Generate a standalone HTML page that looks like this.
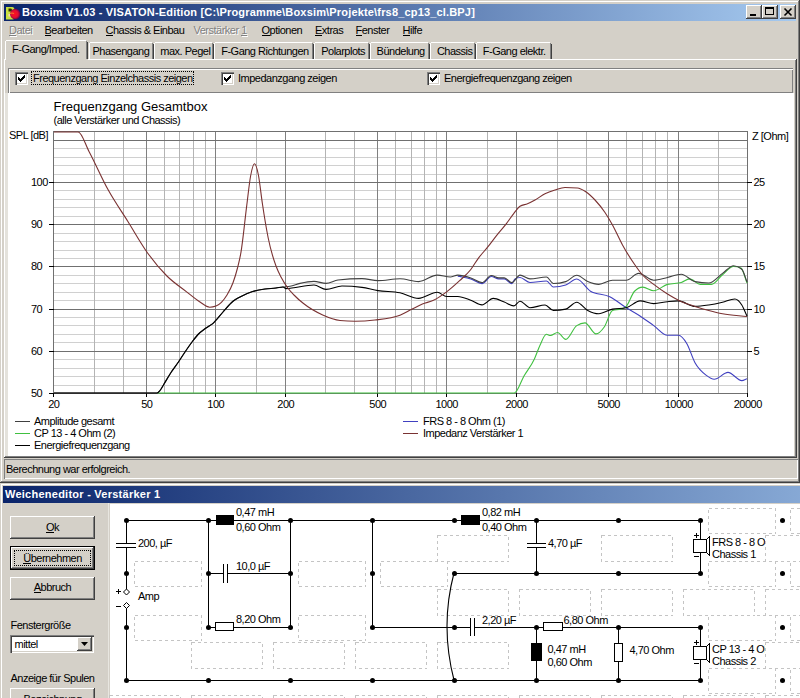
<!DOCTYPE html><html><head><meta charset="utf-8"><style>
html,body{margin:0;padding:0;}
body{width:800px;height:698px;overflow:hidden;position:relative;background:#D4D0C8;font-family:"Liberation Sans",sans-serif;}
.t{position:absolute;white-space:pre;line-height:13px;color:#000;}
u{text-decoration:none;border-bottom:1px solid currentColor;line-height:10px;display:inline-block}
</style></head><body>
<div style="position:absolute;left:0px;top:0px;width:800px;height:483px;background:#D4D0C8"></div>
<div style="position:absolute;left:1px;top:1px;width:797px;height:1px;background:#FFFFFF"></div>
<div style="position:absolute;left:1px;top:1px;width:1px;height:481px;background:#FFFFFF"></div>
<div style="position:absolute;left:798px;top:1px;width:1px;height:481px;background:#808080"></div>
<div style="position:absolute;left:799px;top:0px;width:1px;height:483px;background:#404040"></div>
<div style="position:absolute;left:1px;top:481px;width:798px;height:1px;background:#808080"></div>
<div style="position:absolute;left:0px;top:482px;width:800px;height:1px;background:#404040"></div>
<div style="position:absolute;left:4px;top:4px;width:792px;height:17px;background:linear-gradient(to right,#0A246A,#A6CAF0)"></div>
<svg style="position:absolute;left:4px;top:4px" width="18" height="17" viewBox="0 0 18 17">
<defs><radialGradient id="rg" cx=".45" cy=".5" r=".55"><stop offset="0" stop-color="#FF1020"/><stop offset=".6" stop-color="#E01030"/><stop offset="1" stop-color="#600050"/></radialGradient></defs>
<path d="M2 3 h6.5 q2 0 2 2.5 v1 q0 1.5 -1 2 q1.5 .5 1.5 2.5 v1.5 q0 3 -2.5 3 h-6.5 z" fill="#C8E040"/>
<path d="M4.5 4.5 h2.5 q1 0 1 1.5 q0 1.5 -1 1.5 h-2.5 z" fill="#303000"/>
<path d="M4.5 10 h3 v2.5 h-3 z" fill="#F0D0C0"/>
<circle cx="11.2" cy="10" r="5.2" fill="url(#rg)"/>
<path d="M6 9.5 q2 -1 4 0" stroke="#F08030" stroke-width="1.2" fill="none"/>
</svg>
<div class="t" style="left:22px;top:6.19px;font-size:11px;letter-spacing:0.17px;color:#fff;font-weight:bold;">Boxsim V1.03 - VISATON-Edition [C:\Programme\Boxsim\Projekte\frs8_cp13_cl.BPJ]</div>
<div style="position:absolute;left:746px;top:5px;width:16px;height:14px;background:#D4D0C8;box-shadow: inset -1px -1px 0 #404040, inset 1px 1px 0 #FFFFFF, inset -2px -2px 0 #808080;"></div>
<div style="position:absolute;left:762px;top:5px;width:16px;height:14px;background:#D4D0C8;box-shadow: inset -1px -1px 0 #404040, inset 1px 1px 0 #FFFFFF, inset -2px -2px 0 #808080;"></div>
<div style="position:absolute;left:780px;top:5px;width:16px;height:14px;background:#D4D0C8;box-shadow: inset -1px -1px 0 #404040, inset 1px 1px 0 #FFFFFF, inset -2px -2px 0 #808080;"></div>
<div style="position:absolute;left:750px;top:14px;width:6px;height:2px;background:#000"></div>
<div style="position:absolute;left:765px;top:7px;width:9px;height:8px;border:1px solid #000;border-top-width:2px;box-sizing:border-box"></div>
<svg style="position:absolute;left:780px;top:5px" width="16" height="14"><path d="M4.5 3.5 L11.5 10.5 M11.5 3.5 L4.5 10.5" stroke="#000" stroke-width="1.6"/></svg>
<div class="t" style="left:10px;top:25.09px;font-size:11px;letter-spacing:-0.5px;color:#fff;"><u>D</u>atei</div>
<div class="t" style="left:9px;top:24.09px;font-size:11px;letter-spacing:-0.5px;color:#808080;"><u>D</u>atei</div>
<div class="t" style="left:44.5px;top:24.09px;font-size:11px;letter-spacing:-0.5px;"><u>B</u>earbeiten</div>
<div class="t" style="left:105.5px;top:24.09px;font-size:11px;letter-spacing:-0.5px;"><u>C</u>hassis &amp; Einbau</div>
<div class="t" style="left:194.5px;top:25.09px;font-size:11px;letter-spacing:-0.5px;color:#fff;">Verstärker <u>1</u></div>
<div class="t" style="left:193.5px;top:24.09px;font-size:11px;letter-spacing:-0.5px;color:#808080;">Verstärker <u>1</u></div>
<div class="t" style="left:261.5px;top:24.09px;font-size:11px;letter-spacing:-0.5px;"><u>O</u>ptionen</div>
<div class="t" style="left:315px;top:24.09px;font-size:11px;letter-spacing:-0.5px;"><u>E</u>xtras</div>
<div class="t" style="left:355.5px;top:24.09px;font-size:11px;letter-spacing:-0.5px;"><u>F</u>enster</div>
<div class="t" style="left:402.5px;top:24.09px;font-size:11px;letter-spacing:-0.5px;"><u>H</u>ilfe</div>
<div style="position:absolute;left:4px;top:59px;width:794px;height:400px;background:#D4D0C8"></div>
<div style="position:absolute;left:4px;top:59px;width:792px;height:1px;background:#FFFFFF"></div>
<div style="position:absolute;left:4px;top:59px;width:1px;height:399px;background:#FFFFFF"></div>
<div style="position:absolute;left:795px;top:60px;width:1px;height:397px;background:#808080"></div>
<div style="position:absolute;left:796px;top:59px;width:1px;height:399px;background:#404040"></div>
<div style="position:absolute;left:5px;top:456px;width:791px;height:1px;background:#808080"></div>
<div style="position:absolute;left:4px;top:457px;width:793px;height:1px;background:#404040"></div>
<div style="position:absolute;left:89px;top:42px;width:65px;height:17px;background:#D4D0C8"></div>
<div style="position:absolute;left:89px;top:43px;width:1px;height:16px;background:#FFFFFF"></div>
<div style="position:absolute;left:90px;top:42px;width:62px;height:1px;background:#FFFFFF"></div>
<div style="position:absolute;left:152px;top:43px;width:1px;height:16px;background:#808080"></div>
<div style="position:absolute;left:153px;top:44px;width:1px;height:15px;background:#404040"></div>
<div class="t" style="left:92.5px;top:44.89px;font-size:11px;letter-spacing:-0.5px;">Phasengang</div>
<div style="position:absolute;left:154px;top:42px;width:60px;height:17px;background:#D4D0C8"></div>
<div style="position:absolute;left:154px;top:43px;width:1px;height:16px;background:#FFFFFF"></div>
<div style="position:absolute;left:155px;top:42px;width:57px;height:1px;background:#FFFFFF"></div>
<div style="position:absolute;left:212px;top:43px;width:1px;height:16px;background:#808080"></div>
<div style="position:absolute;left:213px;top:44px;width:1px;height:15px;background:#404040"></div>
<div class="t" style="left:160.3px;top:44.89px;font-size:11px;letter-spacing:-0.5px;">max. Pegel</div>
<div style="position:absolute;left:214px;top:42px;width:100px;height:17px;background:#D4D0C8"></div>
<div style="position:absolute;left:214px;top:43px;width:1px;height:16px;background:#FFFFFF"></div>
<div style="position:absolute;left:215px;top:42px;width:97px;height:1px;background:#FFFFFF"></div>
<div style="position:absolute;left:312px;top:43px;width:1px;height:16px;background:#808080"></div>
<div style="position:absolute;left:313px;top:44px;width:1px;height:15px;background:#404040"></div>
<div class="t" style="left:221.2px;top:44.89px;font-size:11px;letter-spacing:-0.5px;">F-Gang Richtungen</div>
<div style="position:absolute;left:314px;top:42px;width:56px;height:17px;background:#D4D0C8"></div>
<div style="position:absolute;left:314px;top:43px;width:1px;height:16px;background:#FFFFFF"></div>
<div style="position:absolute;left:315px;top:42px;width:53px;height:1px;background:#FFFFFF"></div>
<div style="position:absolute;left:368px;top:43px;width:1px;height:16px;background:#808080"></div>
<div style="position:absolute;left:369px;top:44px;width:1px;height:15px;background:#404040"></div>
<div class="t" style="left:321.2px;top:44.89px;font-size:11px;letter-spacing:-0.5px;">Polarplots</div>
<div style="position:absolute;left:370px;top:42px;width:60px;height:17px;background:#D4D0C8"></div>
<div style="position:absolute;left:370px;top:43px;width:1px;height:16px;background:#FFFFFF"></div>
<div style="position:absolute;left:371px;top:42px;width:57px;height:1px;background:#FFFFFF"></div>
<div style="position:absolute;left:428px;top:43px;width:1px;height:16px;background:#808080"></div>
<div style="position:absolute;left:429px;top:44px;width:1px;height:15px;background:#404040"></div>
<div class="t" style="left:376.6px;top:44.89px;font-size:11px;letter-spacing:-0.5px;">Bündelung</div>
<div style="position:absolute;left:430px;top:42px;width:46px;height:17px;background:#D4D0C8"></div>
<div style="position:absolute;left:430px;top:43px;width:1px;height:16px;background:#FFFFFF"></div>
<div style="position:absolute;left:431px;top:42px;width:43px;height:1px;background:#FFFFFF"></div>
<div style="position:absolute;left:474px;top:43px;width:1px;height:16px;background:#808080"></div>
<div style="position:absolute;left:475px;top:44px;width:1px;height:15px;background:#404040"></div>
<div class="t" style="left:436.9px;top:44.89px;font-size:11px;letter-spacing:-0.5px;">Chassis</div>
<div style="position:absolute;left:476px;top:42px;width:76px;height:17px;background:#D4D0C8"></div>
<div style="position:absolute;left:476px;top:43px;width:1px;height:16px;background:#FFFFFF"></div>
<div style="position:absolute;left:477px;top:42px;width:73px;height:1px;background:#FFFFFF"></div>
<div style="position:absolute;left:550px;top:43px;width:1px;height:16px;background:#808080"></div>
<div style="position:absolute;left:551px;top:44px;width:1px;height:15px;background:#404040"></div>
<div class="t" style="left:482.8px;top:44.89px;font-size:11px;letter-spacing:-0.5px;">F-Gang elektr.</div>
<div style="position:absolute;left:5px;top:40px;width:83px;height:20px;background:#D4D0C8"></div>
<div style="position:absolute;left:5px;top:41px;width:1px;height:19px;background:#FFFFFF"></div>
<div style="position:absolute;left:6px;top:40px;width:80px;height:1px;background:#FFFFFF"></div>
<div style="position:absolute;left:86px;top:41px;width:1px;height:18px;background:#808080"></div>
<div style="position:absolute;left:87px;top:42px;width:1px;height:17px;background:#404040"></div>
<div class="t" style="left:12px;top:43.39px;font-size:11px;letter-spacing:-0.5px;">F-Gang/Imped.</div>
<div style="position:absolute;left:8px;top:68px;width:785px;height:25px;background:#D4D0C8;box-shadow: inset 1px 1px 0 #808080, inset 2px 2px 0 #FFFFFF, inset -1px -1px 0 #808080;"></div>
<div style="position:absolute;left:15px;top:72px;width:13px;height:13px;background:#fff;box-shadow: inset 1px 1px 0 #808080, inset 2px 2px 0 #404040, inset -1px -1px 0 #FFFFFF, inset -2px -2px 0 #D4D0C8;"></div>
<svg style="position:absolute;left:15px;top:72px" width="13" height="13"><path d="M3 5 L5 7 L10 2 L10 5 L5 10 L3 8 Z" fill="#000" shape-rendering="crispEdges"/></svg>
<div class="t" style="left:33px;top:71.69px;font-size:11px;letter-spacing:-0.5px;">Frequenzgang Einzelchassis zeigen</div>
<div style="position:absolute;left:31px;top:71px;width:163px;height:14px;border:1px dotted #000;box-sizing:border-box"></div>
<div style="position:absolute;left:221px;top:72px;width:13px;height:13px;background:#fff;box-shadow: inset 1px 1px 0 #808080, inset 2px 2px 0 #404040, inset -1px -1px 0 #FFFFFF, inset -2px -2px 0 #D4D0C8;"></div>
<svg style="position:absolute;left:221px;top:72px" width="13" height="13"><path d="M3 5 L5 7 L10 2 L10 5 L5 10 L3 8 Z" fill="#000" shape-rendering="crispEdges"/></svg>
<div class="t" style="left:238px;top:71.69px;font-size:11px;letter-spacing:-0.5px;">Impedanzgang zeigen</div>
<div style="position:absolute;left:427px;top:72px;width:13px;height:13px;background:#fff;box-shadow: inset 1px 1px 0 #808080, inset 2px 2px 0 #404040, inset -1px -1px 0 #FFFFFF, inset -2px -2px 0 #D4D0C8;"></div>
<svg style="position:absolute;left:427px;top:72px" width="13" height="13"><path d="M3 5 L5 7 L10 2 L10 5 L5 10 L3 8 Z" fill="#000" shape-rendering="crispEdges"/></svg>
<div class="t" style="left:444px;top:71.69px;font-size:11px;letter-spacing:-0.5px;">Energiefrequenzgang zeigen</div>
<div style="position:absolute;left:8px;top:93px;width:786px;height:363px;background:#fff"></div>
<div style="position:absolute;left:5px;top:93px;width:3px;height:363px;background:#E4E2DC"></div>
<div style="position:absolute;left:4px;top:459px;width:794px;height:20px;background:#D4D0C8;box-shadow: inset 1px 1px 0 #808080, inset -1px -1px 0 #FFFFFF;"></div>
<div class="t" style="left:6px;top:462.69px;font-size:11px;letter-spacing:-0.5px;">Berechnung war erfolgreich.</div>
<div style="position:absolute;left:0px;top:483px;width:800px;height:215px;background:#D4D0C8"></div>
<div style="position:absolute;left:1px;top:484px;width:799px;height:1px;background:#FFFFFF"></div>
<div style="position:absolute;left:1px;top:484px;width:1px;height:214px;background:#FFFFFF"></div>
<div style="position:absolute;left:3px;top:486px;width:797px;height:17px;background:linear-gradient(to right,#0A246A 0px,#A6CAF0 1000px)"></div>
<div class="t" style="left:5px;top:488.19px;font-size:11px;letter-spacing:0.25px;color:#fff;font-weight:bold;">Weicheneditor - Verstärker 1</div>
<div style="position:absolute;left:110px;top:504px;width:690px;height:194px;background:#fff"></div>
<div style="position:absolute;left:108px;top:503px;width:1px;height:195px;background:#E8E6E0"></div>
<div style="position:absolute;left:10px;top:516px;width:85px;height:23px;background:#D4D0C8;box-shadow: inset -1px -1px 0 #404040, inset 1px 1px 0 #FFFFFF, inset -2px -2px 0 #808080;"></div>
<div class="t" style="left:-47.5px;width:200px;text-align:center;top:521.19px;font-size:11px;letter-spacing:-0.5px;"><u>O</u>k</div>
<div style="position:absolute;left:10px;top:546px;width:85px;height:24px;background:#000"></div>
<div style="position:absolute;left:11px;top:547px;width:83px;height:22px;background:#D4D0C8;box-shadow: inset -1px -1px 0 #404040, inset 1px 1px 0 #FFFFFF, inset -2px -2px 0 #808080;"></div>
<div style="position:absolute;left:14px;top:550px;width:77px;height:16px;border:1px dotted #000;box-sizing:border-box"></div>
<div class="t" style="left:-47.5px;width:200px;text-align:center;top:551.69px;font-size:11px;letter-spacing:-0.5px;"><u>Ü</u>bernehmen</div>
<div style="position:absolute;left:10px;top:577px;width:85px;height:23px;background:#D4D0C8;box-shadow: inset -1px -1px 0 #404040, inset 1px 1px 0 #FFFFFF, inset -2px -2px 0 #808080;"></div>
<div class="t" style="left:-47.5px;width:200px;text-align:center;top:581.39px;font-size:11px;letter-spacing:-0.5px;"><u>A</u>bbruch</div>
<div class="t" style="left:10.5px;top:619.19px;font-size:11px;letter-spacing:-0.5px;">Fenstergröße</div>
<div style="position:absolute;left:10px;top:635px;width:84px;height:18px;background:#fff;box-shadow: inset 1px 1px 0 #808080, inset 2px 2px 0 #404040, inset -1px -1px 0 #FFFFFF, inset -2px -2px 0 #D4D0C8;"></div>
<div style="position:absolute;left:77px;top:637px;width:15px;height:14px;background:#D4D0C8;box-shadow: inset -1px -1px 0 #404040, inset 1px 1px 0 #FFFFFF, inset -2px -2px 0 #808080;"></div>
<svg style="position:absolute;left:77px;top:637px" width="15" height="14"><path d="M4 5 h7 l-3.5 4 z" fill="#000"/></svg>
<div class="t" style="left:14.5px;top:638.39px;font-size:11px;letter-spacing:-0.5px;">mittel</div>
<div class="t" style="left:10.5px;top:672.39px;font-size:11px;letter-spacing:-0.5px;">Anzeige für Spulen</div>
<div style="position:absolute;left:10px;top:688px;width:85px;height:24px;background:#D4D0C8;box-shadow: inset -1px -1px 0 #404040, inset 1px 1px 0 #FFFFFF, inset -2px -2px 0 #808080;"></div>
<div class="t" style="left:-47.5px;width:200px;text-align:center;top:692.69px;font-size:11px;letter-spacing:-0.5px;">Bezeichnung</div>
<svg style="position:absolute;left:0;top:0" width="800" height="698"><g shape-rendering="crispEdges" stroke-width="1" fill="none"><line x1="54" x2="747" y1="385.5" y2="385.5" stroke="#D0D0D0"/><line x1="54" x2="747" y1="376.5" y2="376.5" stroke="#D0D0D0"/><line x1="54" x2="747" y1="368.5" y2="368.5" stroke="#D0D0D0"/><line x1="54" x2="747" y1="359.5" y2="359.5" stroke="#D0D0D0"/><line x1="54" x2="747" y1="342.5" y2="342.5" stroke="#D0D0D0"/><line x1="54" x2="747" y1="334.5" y2="334.5" stroke="#D0D0D0"/><line x1="54" x2="747" y1="325.5" y2="325.5" stroke="#D0D0D0"/><line x1="54" x2="747" y1="317.5" y2="317.5" stroke="#D0D0D0"/><line x1="54" x2="747" y1="300.5" y2="300.5" stroke="#D0D0D0"/><line x1="54" x2="747" y1="292.5" y2="292.5" stroke="#D0D0D0"/><line x1="54" x2="747" y1="283.5" y2="283.5" stroke="#D0D0D0"/><line x1="54" x2="747" y1="275.5" y2="275.5" stroke="#D0D0D0"/><line x1="54" x2="747" y1="258.5" y2="258.5" stroke="#D0D0D0"/><line x1="54" x2="747" y1="250.5" y2="250.5" stroke="#D0D0D0"/><line x1="54" x2="747" y1="241.5" y2="241.5" stroke="#D0D0D0"/><line x1="54" x2="747" y1="233.5" y2="233.5" stroke="#D0D0D0"/><line x1="54" x2="747" y1="216.5" y2="216.5" stroke="#D0D0D0"/><line x1="54" x2="747" y1="207.5" y2="207.5" stroke="#D0D0D0"/><line x1="54" x2="747" y1="199.5" y2="199.5" stroke="#D0D0D0"/><line x1="54" x2="747" y1="190.5" y2="190.5" stroke="#D0D0D0"/><line x1="54" x2="747" y1="174.5" y2="174.5" stroke="#D0D0D0"/><line x1="54" x2="747" y1="165.5" y2="165.5" stroke="#D0D0D0"/><line x1="54" x2="747" y1="157.5" y2="157.5" stroke="#D0D0D0"/><line x1="54" x2="747" y1="148.5" y2="148.5" stroke="#D0D0D0"/><line x1="54" x2="747" y1="131.5" y2="131.5" stroke="#D0D0D0"/><line y1="132" y2="393" x1="94.5" x2="94.5" stroke="#B4B4B4"/><line y1="132" y2="393" x1="123.5" x2="123.5" stroke="#B4B4B4"/><line y1="132" y2="393" x1="164.5" x2="164.5" stroke="#B4B4B4"/><line y1="132" y2="393" x1="179.5" x2="179.5" stroke="#B4B4B4"/><line y1="132" y2="393" x1="193.5" x2="193.5" stroke="#B4B4B4"/><line y1="132" y2="393" x1="205.5" x2="205.5" stroke="#B4B4B4"/><line y1="132" y2="393" x1="256.5" x2="256.5" stroke="#B4B4B4"/><line y1="132" y2="393" x1="325.5" x2="325.5" stroke="#B4B4B4"/><line y1="132" y2="393" x1="354.5" x2="354.5" stroke="#B4B4B4"/><line y1="132" y2="393" x1="395.5" x2="395.5" stroke="#B4B4B4"/><line y1="132" y2="393" x1="411.5" x2="411.5" stroke="#B4B4B4"/><line y1="132" y2="393" x1="424.5" x2="424.5" stroke="#B4B4B4"/><line y1="132" y2="393" x1="436.5" x2="436.5" stroke="#B4B4B4"/><line y1="132" y2="393" x1="487.5" x2="487.5" stroke="#B4B4B4"/><line y1="132" y2="393" x1="557.5" x2="557.5" stroke="#B4B4B4"/><line y1="132" y2="393" x1="586.5" x2="586.5" stroke="#B4B4B4"/><line y1="132" y2="393" x1="626.5" x2="626.5" stroke="#B4B4B4"/><line y1="132" y2="393" x1="642.5" x2="642.5" stroke="#B4B4B4"/><line y1="132" y2="393" x1="655.5" x2="655.5" stroke="#B4B4B4"/><line y1="132" y2="393" x1="667.5" x2="667.5" stroke="#B4B4B4"/><line y1="132" y2="393" x1="718.5" x2="718.5" stroke="#B4B4B4"/><line y1="132" y2="393" x1="146.5" x2="146.5" stroke="#808080"/><line y1="132" y2="393" x1="215.5" x2="215.5" stroke="#808080"/><line y1="132" y2="393" x1="285.5" x2="285.5" stroke="#808080"/><line y1="132" y2="393" x1="377.5" x2="377.5" stroke="#808080"/><line y1="132" y2="393" x1="446.5" x2="446.5" stroke="#808080"/><line y1="132" y2="393" x1="516.5" x2="516.5" stroke="#808080"/><line y1="132" y2="393" x1="608.5" x2="608.5" stroke="#808080"/><line y1="132" y2="393" x1="678.5" x2="678.5" stroke="#808080"/><line x1="54" x2="747" y1="393.5" y2="393.5" stroke="#707070"/><line x1="54" x2="747" y1="351.5" y2="351.5" stroke="#707070"/><line x1="54" x2="747" y1="309.5" y2="309.5" stroke="#707070"/><line x1="54" x2="747" y1="266.5" y2="266.5" stroke="#707070"/><line x1="54" x2="747" y1="224.5" y2="224.5" stroke="#707070"/><line x1="54" x2="747" y1="182.5" y2="182.5" stroke="#707070"/><line x1="54" x2="747" y1="140.5" y2="140.5" stroke="#707070"/><rect x="53.5" y="131.5" width="694" height="262" stroke="#707070"/><line x1="49" x2="54" y1="393.5" y2="393.5" stroke="#000"/><line x1="49" x2="54" y1="351.5" y2="351.5" stroke="#000"/><line x1="747" x2="752" y1="351.5" y2="351.5" stroke="#000"/><line x1="49" x2="54" y1="309.5" y2="309.5" stroke="#000"/><line x1="747" x2="752" y1="309.5" y2="309.5" stroke="#000"/><line x1="49" x2="54" y1="266.5" y2="266.5" stroke="#000"/><line x1="747" x2="752" y1="266.5" y2="266.5" stroke="#000"/><line x1="49" x2="54" y1="224.5" y2="224.5" stroke="#000"/><line x1="747" x2="752" y1="224.5" y2="224.5" stroke="#000"/><line x1="49" x2="54" y1="182.5" y2="182.5" stroke="#000"/><line x1="747" x2="752" y1="182.5" y2="182.5" stroke="#000"/><line x1="53.5" x2="53.5" y1="393" y2="397" stroke="#000"/><line x1="146.5" x2="146.5" y1="393" y2="397" stroke="#000"/><line x1="215.5" x2="215.5" y1="393" y2="397" stroke="#000"/><line x1="285.5" x2="285.5" y1="393" y2="397" stroke="#000"/><line x1="377.5" x2="377.5" y1="393" y2="397" stroke="#000"/><line x1="446.5" x2="446.5" y1="393" y2="397" stroke="#000"/><line x1="516.5" x2="516.5" y1="393" y2="397" stroke="#000"/><line x1="608.5" x2="608.5" y1="393" y2="397" stroke="#000"/><line x1="678.5" x2="678.5" y1="393" y2="397" stroke="#000"/><line x1="747.5" x2="747.5" y1="393" y2="397" stroke="#000"/></g><clipPath id="pc"><rect x="53" y="131" width="696" height="264"/></clipPath><g clip-path="url(#pc)"><path d="M157.00 393.00 C276.10 393.00 395.20 393.00 514.30 393.00 C517.53 393.00 520.77 381.48 524.00 376.00 C527.47 370.12 530.93 366.54 534.40 359.00 C536.27 354.94 538.13 349.14 540.00 345.20 C542.13 340.70 544.27 334.30 546.40 334.30 C547.73 334.30 549.07 335.50 550.40 335.50 C552.77 335.50 555.13 332.50 557.50 332.50 C560.25 332.50 563.00 339.40 565.75 339.40 C569.42 339.40 573.08 328.00 576.75 325.60 C579.50 323.80 582.25 322.90 585.00 322.90 C588.67 322.90 592.33 333.90 596.00 333.90 C598.75 333.90 601.50 330.90 604.25 327.00 C607.00 323.10 609.75 311.43 612.50 310.50 C615.25 309.57 618.00 310.03 620.75 309.10 C622.58 308.48 624.42 308.20 626.25 306.40 C629.00 303.70 631.75 294.02 634.50 291.25 C637.25 288.48 640.00 287.10 642.75 287.10 C646.42 287.10 650.08 290.70 653.75 290.70 C658.33 290.70 662.92 285.67 667.50 284.40 C672.08 283.13 676.67 283.77 681.25 282.50 C684.00 281.74 686.75 278.90 689.50 278.90 C693.17 278.90 696.83 284.40 700.50 284.40 C704.17 284.40 707.83 284.40 711.50 284.40 C715.17 284.40 718.83 277.73 722.50 274.75 C726.17 271.77 729.83 266.50 733.50 266.50 C736.00 266.50 738.50 267.00 741.00 268.00 C743.00 268.80 745.00 278.00 747.00 283.00" fill="none" stroke="#40C040" stroke-width="1.1" stroke-linejoin="round"/><path d="M457.80 276.10 C462.13 277.03 466.47 277.49 470.80 278.90 C474.53 280.11 478.27 283.60 482.00 283.60 C485.10 283.60 488.20 276.50 491.30 276.50 C493.78 276.50 496.27 278.90 498.75 278.90 C500.60 278.90 502.45 278.90 504.30 278.90 C506.80 278.90 509.30 283.60 511.80 283.60 C512.87 283.60 513.93 279.64 515.00 279.00 C516.67 278.00 518.33 277.50 520.00 277.50 C523.33 277.50 526.67 282.50 530.00 282.50 C535.50 282.50 541.00 281.00 546.50 281.00 C548.80 281.00 551.10 287.00 553.40 287.00 C557.52 287.00 561.63 286.33 565.75 285.00 C569.42 283.81 573.08 279.00 576.75 279.00 C581.33 279.00 585.92 288.63 590.50 291.25 C596.92 294.92 603.33 293.60 609.75 296.75 C615.25 299.45 620.75 304.28 626.25 307.75 C630.83 310.64 635.42 313.02 640.00 316.00 C644.58 318.98 649.17 322.39 653.75 325.60 C658.33 328.81 662.92 335.25 667.50 335.25 C671.17 335.25 674.83 335.25 678.50 335.25 C681.25 335.25 684.00 338.92 686.75 343.50 C689.50 348.08 692.25 357.76 695.00 362.75 C698.67 369.40 702.33 372.28 706.00 375.10 C708.75 377.21 711.50 379.25 714.25 379.25 C718.83 379.25 723.42 372.40 728.00 372.40 C732.60 372.40 737.20 380.60 741.80 380.60 C743.53 380.60 745.27 379.33 747.00 378.70" fill="none" stroke="#4040C0" stroke-width="1.1" stroke-linejoin="round"/><path d="M54.00 393.00 C88.33 393.00 122.67 393.00 157.00 393.00 C158.00 393.00 159.00 391.67 160.00 390.50 C161.33 388.94 162.67 386.18 164.00 384.00 C166.33 380.19 168.67 376.07 171.00 372.50 C173.53 368.62 176.07 365.54 178.60 361.80 C180.73 358.65 182.87 355.16 185.00 352.00 C187.33 348.54 189.67 345.11 192.00 342.00 C194.00 339.34 196.00 336.62 198.00 334.50 C200.67 331.67 203.33 329.99 206.00 328.00 C208.53 326.11 211.07 325.06 213.60 322.80 C216.73 320.01 219.87 315.48 223.00 312.00 C226.33 308.30 229.67 303.97 233.00 301.30 C235.33 299.43 237.67 298.28 240.00 297.00 C244.20 294.70 248.40 292.94 252.60 291.60 C256.73 290.28 260.87 289.61 265.00 289.00 C268.67 288.46 272.33 288.45 276.00 288.00 C278.33 287.71 280.67 287.28 283.00 287.00 C285.33 286.72 287.67 286.72 290.00 286.30 C293.33 285.71 296.67 284.16 300.00 283.40 C304.67 282.33 309.33 281.40 314.00 281.40 C318.00 281.40 322.00 283.40 326.00 283.40 C330.00 283.40 334.00 280.47 338.00 280.00 C346.00 279.07 354.00 278.60 362.00 278.60 C367.33 278.60 372.67 280.60 378.00 280.60 C385.33 280.60 392.67 278.80 400.00 278.80 C406.20 278.80 412.40 281.60 418.60 281.60 C424.83 281.60 431.07 275.10 437.30 275.10 C441.63 275.10 445.97 277.00 450.30 277.00 C452.80 277.00 455.30 275.10 457.80 275.10 C462.13 275.10 466.47 276.49 470.80 277.90 C474.53 279.11 478.27 282.60 482.00 282.60 C485.10 282.60 488.20 275.50 491.30 275.50 C493.78 275.50 496.27 277.90 498.75 277.90 C500.60 277.90 502.45 277.90 504.30 277.90 C506.80 277.90 509.30 282.60 511.80 282.60 C514.53 282.60 517.27 275.10 520.00 275.10 C523.33 275.10 526.67 278.90 530.00 278.90 C535.50 278.90 541.00 277.00 546.50 277.00 C548.80 277.00 551.10 283.50 553.40 283.50 C557.52 283.50 561.63 282.87 565.75 281.60 C569.42 280.47 573.08 275.30 576.75 275.30 C580.42 275.30 584.08 280.08 587.75 281.60 C591.42 283.12 595.08 284.40 598.75 284.40 C603.33 284.40 607.92 280.25 612.50 280.25 C617.08 280.25 621.67 280.25 626.25 280.25 C630.37 280.25 634.48 273.40 638.60 273.40 C643.65 273.40 648.70 280.25 653.75 280.25 C658.33 280.25 662.92 278.51 667.50 277.50 C672.08 276.49 676.67 274.20 681.25 274.20 C685.83 274.20 690.42 280.67 695.00 281.60 C699.58 282.53 704.17 283.00 708.75 283.00 C713.33 283.00 717.92 276.60 722.50 273.40 C726.17 270.84 729.83 265.70 733.50 265.70 C736.27 265.70 739.03 266.88 741.80 269.25 C743.53 270.73 745.27 277.75 747.00 282.00" fill="none" stroke="#404040" stroke-width="1.1" stroke-linejoin="round"/><path d="M54.00 393.00 C88.33 393.00 122.67 393.00 157.00 393.00 C158.00 393.00 159.00 391.67 160.00 390.50 C161.33 388.94 162.67 386.18 164.00 384.00 C166.33 380.19 168.67 376.07 171.00 372.50 C173.53 368.62 176.07 365.54 178.60 361.80 C180.73 358.65 182.87 355.16 185.00 352.00 C187.33 348.54 189.67 345.11 192.00 342.00 C194.00 339.34 196.00 336.62 198.00 334.50 C200.67 331.67 203.33 329.99 206.00 328.00 C208.53 326.11 211.07 325.06 213.60 322.80 C216.73 320.01 219.87 315.48 223.00 312.00 C226.33 308.30 229.67 303.97 233.00 301.30 C235.33 299.43 237.67 298.28 240.00 297.00 C244.20 294.70 248.40 292.94 252.60 291.60 C256.73 290.28 260.87 289.61 265.00 289.00 C268.67 288.46 272.33 288.45 276.00 288.00 C278.33 287.71 280.67 287.00 283.00 287.00 C284.00 287.00 285.00 288.60 286.00 288.60 C295.33 288.60 304.67 285.00 314.00 285.00 C318.00 285.00 322.00 289.40 326.00 289.40 C331.33 289.40 336.67 286.00 342.00 286.00 C348.67 286.00 355.33 286.47 362.00 287.40 C367.33 288.15 372.67 289.76 378.00 290.60 C385.33 291.76 392.67 291.33 400.00 292.80 C406.20 294.04 412.40 298.40 418.60 298.40 C424.83 298.40 431.07 292.30 437.30 292.30 C440.40 292.30 443.50 296.50 446.60 296.50 C450.33 296.50 454.07 296.50 457.80 296.50 C462.13 296.50 466.47 298.76 470.80 300.30 C474.53 301.63 478.27 304.90 482.00 304.90 C485.73 304.90 489.47 298.40 493.20 298.40 C496.90 298.40 500.60 300.72 504.30 302.10 C507.43 303.26 510.57 305.90 513.70 305.90 C515.80 305.90 517.90 301.20 520.00 301.20 C523.33 301.20 526.67 307.75 530.00 307.75 C535.03 307.75 540.07 305.00 545.10 305.00 C547.87 305.00 550.63 310.50 553.40 310.50 C557.52 310.50 561.63 310.03 565.75 309.10 C569.42 308.27 573.08 302.25 576.75 302.25 C580.42 302.25 584.08 308.57 587.75 310.50 C591.42 312.43 595.08 313.80 598.75 313.80 C603.33 313.80 607.92 310.00 612.50 309.10 C617.08 308.20 621.67 308.65 626.25 307.75 C630.83 306.85 635.42 300.90 640.00 300.90 C644.58 300.90 649.17 303.60 653.75 303.60 C658.33 303.60 662.92 302.17 667.50 301.70 C671.17 301.33 674.83 300.90 678.50 300.90 C684.00 300.90 689.50 306.40 695.00 306.40 C699.58 306.40 704.17 305.69 708.75 305.00 C713.33 304.31 717.92 303.32 722.50 302.25 C726.63 301.29 730.77 299.00 734.90 299.00 C737.20 299.00 739.50 301.37 741.80 305.00 C743.53 307.74 745.27 312.33 747.00 316.00" fill="none" stroke="#000000" stroke-width="1.1" stroke-linejoin="round"/><path d="M54.00 132.00 C62.07 132.00 70.13 132.00 78.20 132.00 C81.80 132.00 85.40 144.66 89.00 151.40 C95.47 163.50 101.93 178.64 108.40 190.30 C114.90 202.02 121.40 211.10 127.90 221.50 C134.40 231.90 140.90 243.62 147.40 252.70 C153.90 261.78 160.40 269.51 166.90 276.00 C173.37 282.46 179.83 286.57 186.30 291.60 C190.87 295.15 195.43 299.13 200.00 302.00 C203.23 304.03 206.47 307.20 209.70 307.20 C211.80 307.20 213.90 306.80 216.00 306.00 C217.80 305.31 219.60 304.08 221.40 302.30 C223.27 300.45 225.13 298.09 227.00 295.00 C229.00 291.69 231.00 288.30 233.00 282.80 C234.50 278.67 236.00 273.97 237.50 268.00 C238.63 263.49 239.77 259.29 240.90 252.70 C242.83 241.45 244.77 221.03 246.70 205.90 C248.00 195.72 249.30 183.02 250.60 176.00 C251.90 168.98 253.20 163.80 254.50 163.80 C255.80 163.80 257.10 168.47 258.40 175.00 C259.70 181.53 261.00 194.31 262.30 203.00 C264.27 216.14 266.23 228.32 268.20 238.00 C270.80 250.80 273.40 258.87 276.00 266.00 C277.67 270.57 279.33 273.75 281.00 277.00 C283.20 281.29 285.40 284.67 287.60 287.70 C289.73 290.64 291.87 292.78 294.00 295.00 C297.07 298.20 300.13 300.83 303.20 303.30 C309.70 308.53 316.20 312.07 322.70 315.00 C328.47 317.60 334.23 319.92 340.00 320.50 C345.00 321.00 350.00 321.25 355.00 321.25 C361.67 321.25 368.33 320.80 375.00 320.00 C383.33 319.00 391.67 318.40 400.00 315.20 C403.73 313.77 407.47 311.47 411.20 309.60 C414.93 307.73 418.67 305.55 422.40 304.00 C426.10 302.46 429.80 302.06 433.50 300.30 C437.87 298.23 442.23 295.18 446.60 291.90 C450.93 288.64 455.27 284.76 459.60 280.70 C463.33 277.21 467.07 274.34 470.80 269.50 C473.30 266.26 475.80 261.70 478.30 258.30 C481.40 254.09 484.50 251.07 487.60 247.20 C490.70 243.33 493.80 238.98 496.90 235.10 C500.00 231.22 503.10 227.92 506.20 223.90 C508.70 220.66 511.20 216.76 513.70 213.60 C515.80 210.94 517.90 207.57 520.00 206.20 C522.50 204.57 525.00 204.78 527.50 203.75 C530.00 202.72 532.50 201.38 535.00 200.00 C538.33 198.15 541.67 195.42 545.00 193.75 C548.33 192.08 551.67 191.04 555.00 190.00 C558.33 188.96 561.67 187.50 565.00 187.50 C569.17 187.50 573.33 187.67 577.50 188.00 C580.00 188.20 582.50 189.69 585.00 191.25 C588.33 193.33 591.67 196.46 595.00 200.00 C598.33 203.54 601.67 207.54 605.00 212.50 C607.50 216.22 610.00 220.48 612.50 225.00 C615.83 231.03 619.17 238.93 622.50 245.00 C626.67 252.59 630.83 259.03 635.00 265.00 C637.50 268.58 640.00 272.16 642.50 275.00 C646.25 279.25 650.00 281.50 653.75 284.40 C658.33 287.95 662.92 291.14 667.50 294.00 C671.63 296.58 675.77 298.96 679.90 300.90 C684.93 303.26 689.97 304.74 695.00 306.40 C699.58 307.91 704.17 309.27 708.75 310.50 C713.33 311.73 717.92 312.91 722.50 313.80 C730.67 315.38 738.83 315.60 747.00 316.50" fill="none" stroke="#7A3232" stroke-width="1.1" stroke-linejoin="round"/></g><g shape-rendering="crispEdges"><line x1="15" x2="30" y1="421.5" y2="421.5" stroke="#404040"/><line x1="15" x2="30" y1="433.5" y2="433.5" stroke="#40C040"/><line x1="15" x2="30" y1="445.5" y2="445.5" stroke="#000"/><line x1="403" x2="418" y1="421.5" y2="421.5" stroke="#4040C0"/><line x1="403" x2="418" y1="433.5" y2="433.5" stroke="#7A3232"/></g><g shape-rendering="crispEdges" fill="none" stroke="#000"></g><g shape-rendering="crispEdges" fill="#fff" stroke="#C4C4C4" stroke-dasharray="3,3"><rect x="708.5" y="508.5" width="67" height="25"/><rect x="790.5" y="508.5" width="67" height="25"/><rect x="134.5" y="561.5" width="67" height="25"/><rect x="298.5" y="561.5" width="67" height="25"/><rect x="380.5" y="561.5" width="67" height="25"/><rect x="708.5" y="561.5" width="67" height="25"/><rect x="790.5" y="561.5" width="67" height="25"/><rect x="134.5" y="615.5" width="67" height="25"/><rect x="298.5" y="615.5" width="67" height="25"/><rect x="708.5" y="615.5" width="67" height="25"/><rect x="790.5" y="615.5" width="67" height="25"/><rect x="708.5" y="668.5" width="67" height="25"/><rect x="790.5" y="668.5" width="67" height="25"/><rect x="191.5" y="642.5" width="71" height="26"/><rect x="273.5" y="642.5" width="71" height="26"/><rect x="355.5" y="642.5" width="71" height="26"/><rect x="437.5" y="535.5" width="71" height="26"/><rect x="437.5" y="589.5" width="71" height="26"/><rect x="437.5" y="642.5" width="71" height="26"/><rect x="519.5" y="589.5" width="71" height="26"/><rect x="601.5" y="535.5" width="71" height="26"/><rect x="601.5" y="589.5" width="71" height="26"/><rect x="683.5" y="589.5" width="71" height="26"/><rect x="765.5" y="535.5" width="71" height="26"/><rect x="765.5" y="589.5" width="71" height="26"/><rect x="765.5" y="642.5" width="71" height="26"/><rect x="109.5" y="695.5" width="71" height="26"/><rect x="191.5" y="695.5" width="71" height="26"/><rect x="273.5" y="695.5" width="71" height="26"/><rect x="355.5" y="695.5" width="71" height="26"/><rect x="437.5" y="695.5" width="71" height="26"/><rect x="519.5" y="695.5" width="71" height="26"/><rect x="601.5" y="695.5" width="71" height="26"/><rect x="683.5" y="695.5" width="71" height="26"/><rect x="765.5" y="695.5" width="71" height="26"/></g><g shape-rendering="crispEdges" fill="none" stroke="#000"><line x1="126" y1="520.5" x2="700" y2="520.5" stroke="#000"/><line x1="126" y1="680.5" x2="700" y2="680.5" stroke="#000"/><line x1="126.5" y1="520" x2="126.5" y2="544" stroke="#000"/><line x1="126.5" y1="548" x2="126.5" y2="589" stroke="#000"/><line x1="126.5" y1="608" x2="126.5" y2="680" stroke="#000"/><line x1="208.5" y1="520" x2="208.5" y2="627" stroke="#000"/><line x1="290.5" y1="520" x2="290.5" y2="627" stroke="#000"/><line x1="372.5" y1="520" x2="372.5" y2="627" stroke="#000"/><line x1="208" y1="573.5" x2="223" y2="573.5" stroke="#000"/><line x1="227" y1="573.5" x2="290" y2="573.5" stroke="#000"/><line x1="208" y1="627.5" x2="290" y2="627.5" stroke="#000"/><line x1="372" y1="627.5" x2="470" y2="627.5" stroke="#000"/><line x1="474" y1="627.5" x2="700" y2="627.5" stroke="#000"/><line x1="454" y1="573.5" x2="700" y2="573.5" stroke="#000"/><line x1="536.5" y1="520" x2="536.5" y2="544" stroke="#000"/><line x1="536.5" y1="548" x2="536.5" y2="573" stroke="#000"/><line x1="536.5" y1="627" x2="536.5" y2="680" stroke="#000"/><line x1="618.5" y1="627" x2="618.5" y2="680" stroke="#000"/><line x1="700.5" y1="520" x2="700.5" y2="573" stroke="#000"/><line x1="700.5" y1="627" x2="700.5" y2="680" stroke="#000"/></g><path d="M454 573 Q440 626 454 680" fill="none" stroke="#000" stroke-width="1.1"/><g shape-rendering="crispEdges"><rect x="216" y="515" width="18" height="10" fill="#000"/><rect x="461" y="515" width="19" height="10" fill="#000"/><rect x="531" y="643" width="11" height="18" fill="#000"/><rect x="215.5" y="622.5" width="18" height="8" fill="#fff" stroke="#000"/><rect x="543.5" y="622.5" width="19" height="8" fill="#fff" stroke="#000"/><rect x="614.5" y="643.5" width="8" height="18" fill="#fff" stroke="#000"/><line x1="116" x2="136" y1="543.5" y2="543.5" stroke="#000" stroke-width="1"/><line x1="116" x2="136" y1="547.5" y2="547.5" stroke="#000"/><line x1="223.5" x2="223.5" y1="564" y2="583" stroke="#000"/><line x1="227.5" x2="227.5" y1="564" y2="583" stroke="#000"/><line x1="470.5" x2="470.5" y1="618" y2="636" stroke="#000"/><line x1="474.5" x2="474.5" y1="618" y2="636" stroke="#000"/><line x1="527" x2="546" y1="543.5" y2="543.5" stroke="#000"/><line x1="527" x2="546" y1="547.5" y2="547.5" stroke="#000"/><rect x="693.5" y="539.5" width="13" height="13" fill="#fff" stroke="#000"/><path d="M706.5 539.5 L709.5 536.5 L709.5 555.5 L706.5 552.5" fill="#fff" stroke="#000"/><line x1="694" x2="699" y1="535.5" y2="535.5" stroke="#000"/><line x1="696.5" x2="696.5" y1="533" y2="538" stroke="#000"/><line x1="694" x2="699" y1="556.5" y2="556.5" stroke="#000"/><rect x="693.5" y="646.5" width="13" height="13" fill="#fff" stroke="#000"/><path d="M706.5 646.5 L709.5 643.5 L709.5 662.5 L706.5 659.5" fill="#fff" stroke="#000"/><line x1="694" x2="699" y1="642.5" y2="642.5" stroke="#000"/><line x1="696.5" x2="696.5" y1="640" y2="645" stroke="#000"/><line x1="694" x2="699" y1="663.5" y2="663.5" stroke="#000"/></g><path d="M126.5 589 l3 3 l-3 3 l-3 -3 z M126.5 602.5 l3 3 l-3 3 l-3 -3 z" fill="#fff" stroke="#000"/><g shape-rendering="crispEdges"><line x1="116" x2="121" y1="591.5" y2="591.5" stroke="#000"/><line x1="118.5" x2="118.5" y1="589" y2="594" stroke="#000"/><line x1="116" x2="121" y1="606.5" y2="606.5" stroke="#000"/></g><circle cx="126.5" cy="520.5" r="2.5" fill="#000"/><circle cx="126.5" cy="573.5" r="2.5" fill="#000"/><circle cx="126.5" cy="627.5" r="2.5" fill="#000"/><circle cx="126.5" cy="680.5" r="2.5" fill="#000"/><circle cx="208.5" cy="520.5" r="2.5" fill="#000"/><circle cx="208.5" cy="573.5" r="2.5" fill="#000"/><circle cx="208.5" cy="627.5" r="2.5" fill="#000"/><circle cx="208.5" cy="680.5" r="2.5" fill="#000"/><circle cx="290.5" cy="520.5" r="2.5" fill="#000"/><circle cx="290.5" cy="573.5" r="2.5" fill="#000"/><circle cx="290.5" cy="627.5" r="2.5" fill="#000"/><circle cx="290.5" cy="680.5" r="2.5" fill="#000"/><circle cx="372.5" cy="520.5" r="2.5" fill="#000"/><circle cx="372.5" cy="573.5" r="2.5" fill="#000"/><circle cx="372.5" cy="627.5" r="2.5" fill="#000"/><circle cx="372.5" cy="680.5" r="2.5" fill="#000"/><circle cx="454.5" cy="520.5" r="2.5" fill="#000"/><circle cx="454.5" cy="573.5" r="2.5" fill="#000"/><circle cx="454.5" cy="627.5" r="2.5" fill="#000"/><circle cx="454.5" cy="680.5" r="2.5" fill="#000"/><circle cx="536.5" cy="520.5" r="2.5" fill="#000"/><circle cx="536.5" cy="573.5" r="2.5" fill="#000"/><circle cx="536.5" cy="627.5" r="2.5" fill="#000"/><circle cx="536.5" cy="680.5" r="2.5" fill="#000"/><circle cx="618.5" cy="520.5" r="2.5" fill="#000"/><circle cx="618.5" cy="573.5" r="2.5" fill="#000"/><circle cx="618.5" cy="627.5" r="2.5" fill="#000"/><circle cx="618.5" cy="680.5" r="2.5" fill="#000"/><circle cx="700.5" cy="520.5" r="2.5" fill="#000"/><circle cx="700.5" cy="573.5" r="2.5" fill="#000"/><circle cx="700.5" cy="627.5" r="2.5" fill="#000"/><circle cx="700.5" cy="680.5" r="2.5" fill="#000"/><circle cx="782.5" cy="520.5" r="2.5" fill="#000"/><circle cx="782.5" cy="573.5" r="2.5" fill="#000"/><circle cx="782.5" cy="627.5" r="2.5" fill="#000"/><circle cx="782.5" cy="680.5" r="2.5" fill="#000"/></svg>
<div class="t" style="left:53.5px;top:100.25px;font-size:13px;letter-spacing:0px;">Frequenzgang Gesamtbox</div>
<div class="t" style="left:53.5px;top:114.09px;font-size:11px;letter-spacing:-0.5px;">(alle Verstärker und Chassis)</div>
<div class="t" style="left:9px;top:129.29px;font-size:11px;letter-spacing:-0.5px;">SPL [dB]</div>
<div class="t" style="left:752px;top:130.19px;font-size:11px;letter-spacing:-0.5px;">Z [Ohm]</div>
<div class="t" style="left:31px;top:387.19px;font-size:11px;letter-spacing:-0.5px;">50</div>
<div class="t" style="left:31px;top:345.19px;font-size:11px;letter-spacing:-0.5px;">60</div>
<div class="t" style="left:31px;top:303.19px;font-size:11px;letter-spacing:-0.5px;">70</div>
<div class="t" style="left:31px;top:260.19px;font-size:11px;letter-spacing:-0.5px;">80</div>
<div class="t" style="left:31px;top:218.19px;font-size:11px;letter-spacing:-0.5px;">90</div>
<div class="t" style="left:31px;top:176.19px;font-size:11px;letter-spacing:-0.5px;">100</div>
<div class="t" style="left:753.5px;top:345.19px;font-size:11px;letter-spacing:-0.5px;">5</div>
<div class="t" style="left:753.5px;top:303.19px;font-size:11px;letter-spacing:-0.5px;">10</div>
<div class="t" style="left:753.5px;top:260.19px;font-size:11px;letter-spacing:-0.5px;">15</div>
<div class="t" style="left:753.5px;top:218.19px;font-size:11px;letter-spacing:-0.5px;">20</div>
<div class="t" style="left:753.5px;top:176.19px;font-size:11px;letter-spacing:-0.5px;">25</div>
<div class="t" style="left:-46.25px;width:200px;text-align:center;top:398.39px;font-size:11px;letter-spacing:-0.5px;">20</div>
<div class="t" style="left:46.75px;width:200px;text-align:center;top:398.39px;font-size:11px;letter-spacing:-0.5px;">50</div>
<div class="t" style="left:115.75px;width:200px;text-align:center;top:398.39px;font-size:11px;letter-spacing:-0.5px;">100</div>
<div class="t" style="left:185.75px;width:200px;text-align:center;top:398.39px;font-size:11px;letter-spacing:-0.5px;">200</div>
<div class="t" style="left:277.75px;width:200px;text-align:center;top:398.39px;font-size:11px;letter-spacing:-0.5px;">500</div>
<div class="t" style="left:346.75px;width:200px;text-align:center;top:398.39px;font-size:11px;letter-spacing:-0.5px;">1000</div>
<div class="t" style="left:416.75px;width:200px;text-align:center;top:398.39px;font-size:11px;letter-spacing:-0.5px;">2000</div>
<div class="t" style="left:508.75px;width:200px;text-align:center;top:398.39px;font-size:11px;letter-spacing:-0.5px;">5000</div>
<div class="t" style="left:578.75px;width:200px;text-align:center;top:398.39px;font-size:11px;letter-spacing:-0.5px;">10000</div>
<div class="t" style="left:647.75px;width:200px;text-align:center;top:398.39px;font-size:11px;letter-spacing:-0.5px;">20000</div>
<div class="t" style="left:34px;top:414.69px;font-size:11px;letter-spacing:-0.5px;">Amplitude gesamt</div>
<div class="t" style="left:34px;top:426.69px;font-size:11px;letter-spacing:-0.5px;">CP 13 - 4 Ohm (2)</div>
<div class="t" style="left:34px;top:438.69px;font-size:11px;letter-spacing:-0.5px;">Energiefrequenzgang</div>
<div class="t" style="left:423px;top:414.69px;font-size:11px;letter-spacing:-0.5px;">FRS 8 - 8 Ohm (1)</div>
<div class="t" style="left:423px;top:426.69px;font-size:11px;letter-spacing:-0.5px;">Impedanz Verstärker 1</div>
<div class="t" style="left:138px;top:536.69px;font-size:11px;letter-spacing:-0.5px;">200, µF</div>
<div class="t" style="left:138px;top:590.19px;font-size:11px;letter-spacing:-0.5px;">Amp</div>
<div class="t" style="left:236px;top:506.19px;font-size:11px;letter-spacing:-0.5px;">0,47 mH</div>
<div class="t" style="left:236px;top:520.99px;font-size:11px;letter-spacing:-0.5px;">0,60 Ohm</div>
<div class="t" style="left:236px;top:559.69px;font-size:11px;letter-spacing:-0.5px;">10,0 µF</div>
<div class="t" style="left:236px;top:612.69px;font-size:11px;letter-spacing:-0.5px;">8,20 Ohm</div>
<div class="t" style="left:482px;top:506.19px;font-size:11px;letter-spacing:-0.5px;">0,82 mH</div>
<div class="t" style="left:482px;top:520.99px;font-size:11px;letter-spacing:-0.5px;">0,40 Ohm</div>
<div class="t" style="left:548px;top:536.69px;font-size:11px;letter-spacing:-0.5px;">4,70 µF</div>
<div class="t" style="left:482px;top:613.69px;font-size:11px;letter-spacing:-0.5px;">2,20 µF</div>
<div class="t" style="left:563.5px;top:613.89px;font-size:11px;letter-spacing:-0.5px;">6,80 Ohm</div>
<div class="t" style="left:547.5px;top:643.19px;font-size:11px;letter-spacing:-0.5px;">0,47 mH</div>
<div class="t" style="left:547.5px;top:655.69px;font-size:11px;letter-spacing:-0.5px;">0,60 Ohm</div>
<div class="t" style="left:629.5px;top:643.69px;font-size:11px;letter-spacing:-0.5px;">4,70 Ohm</div>
<div style="position:absolute;left:711px;top:530px;width:54px;height:40px;overflow:hidden">
<div class="t" style="left:1px;top:5.69px;font-size:11px;letter-spacing:-0.5px;">FRS 8 - 8 Ohm</div>
<div class="t" style="left:1px;top:18.19px;font-size:11px;letter-spacing:-0.5px;">Chassis 1</div>
</div>
<div style="position:absolute;left:711px;top:637px;width:54px;height:40px;overflow:hidden">
<div class="t" style="left:1px;top:5.69px;font-size:11px;letter-spacing:-0.5px;">CP 13 - 4 Ohm</div>
<div class="t" style="left:1px;top:18.19px;font-size:11px;letter-spacing:-0.5px;">Chassis 2</div>
</div>
</body></html>
